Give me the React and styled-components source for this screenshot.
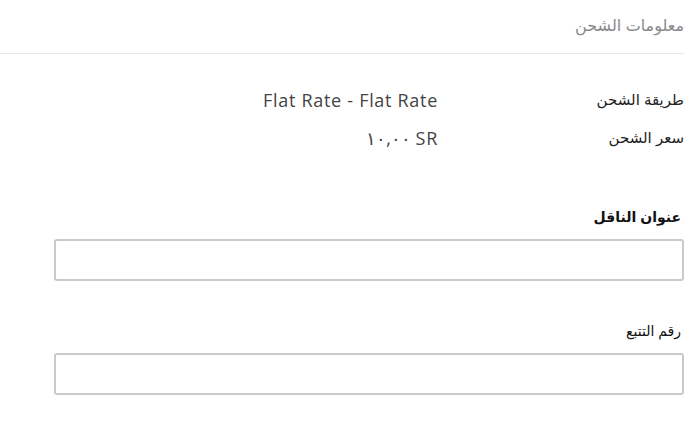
import React from "react";
import styled, { createGlobalStyle } from "styled-components";

const Global = createGlobalStyle`
  html, body { margin: 0; padding: 0; background: #fff; }
  body { font-family: "Liberation Sans", "DejaVu Sans", sans-serif; }
`;

const Page = styled.div`
  direction: rtl;
  width: 684px;
  box-sizing: border-box;
`;

const Header = styled.div`
  height: 54px;
  border-bottom: 1px solid #e6e6e6;
  display: flex;
  align-items: center;
  padding-bottom: 2px;
  box-sizing: border-box;
`;

const Title = styled.h3`
  margin: 0;
  font-weight: normal;
  font-size: 16px;
  color: #8a8a8a;
  font-family: "Liberation Sans", "DejaVu Sans", sans-serif;
`;

const Info = styled.div`
  display: grid;
  grid-template-columns: 246px 1fr;
  row-gap: 16px;
  padding-top: 35px;
`;

const Label = styled.div`
  font-size: 15px;
  color: #222;
  line-height: 22px;
`;

const Value = styled.div`
  direction: ltr;
  text-align: right;
  font-family: "Open Sans", "Lato", sans-serif;
  font-size: 18px;
  color: #444;
  line-height: 22px;
  letter-spacing: 0.7px;
`;

const Form = styled.div`
  padding-top: 58px;
  margin-left: 54px;
  display: flex;
  flex-direction: column;
  gap: 40px;
`;

const Field = styled.div`
  display: flex;
  flex-direction: column;
  gap: 12px;
`;

const FieldLabel = styled.label`
  font-size: 14px;
  font-weight: ${(p) => (p.$bold ? "bold" : "normal")};
  color: #111;
  line-height: 20px;
  padding-right: 3px;
`;

const Input = styled.input`
  height: 42px;
  box-sizing: border-box;
  border: 2px solid #c9c9c9;
  border-radius: 3px;
  width: 100%;
  outline: none;
  background: #fff;
`;

export default function App() {
  return (
    <Page>
      <Global />
      <Header>
        <Title>معلومات الشحن</Title>
      </Header>
      <Info>
        <Label>طريقة الشحن</Label>
        <Value>Flat Rate - Flat Rate</Value>
        <Label>سعر الشحن</Label>
        <Value>١٠,٠٠ SR</Value>
      </Info>
      <Form>
        <Field>
          <FieldLabel $bold>عنوان الناقل</FieldLabel>
          <Input type="text" />
        </Field>
        <Field>
          <FieldLabel>رقم التتبع</FieldLabel>
          <Input type="text" />
        </Field>
      </Form>
    </Page>
  );
}
